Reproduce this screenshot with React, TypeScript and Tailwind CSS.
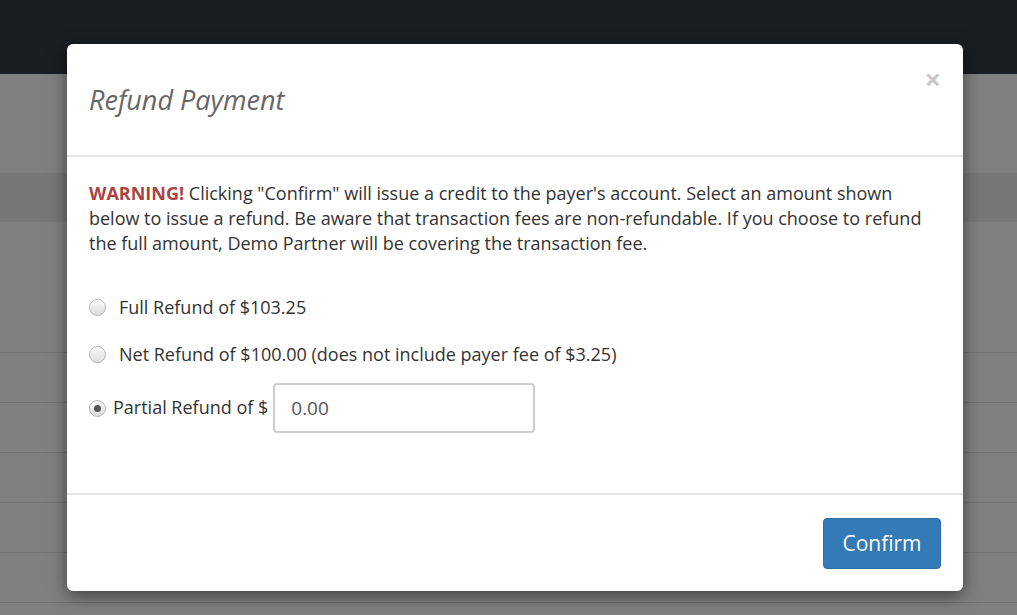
import React, { useState } from 'react';

type Choice = 'full' | 'net' | 'partial';

function Radio({ checked }: { checked: boolean }) {
  return (
    <span className="flex h-[17px] w-[17px] shrink-0 items-center justify-center rounded-full border border-[#b4b4b4] bg-gradient-to-b from-[#fbfbfb] to-[#dcdcdc] shadow-[inset_0_1px_0_#fff]">
      {checked && <span className="h-[7px] w-[7px] rounded-full bg-[#555]" />}
    </span>
  );
}

export default function App() {
  const [choice, setChoice] = useState<Choice>('partial');
  const [amount, setAmount] = useState('0.00');

  return (
    <div className="relative h-[615px] w-full overflow-hidden bg-[#808080] font-['Open_Sans',sans-serif]">
      {/* page behind the backdrop */}
      <div className="h-[74px] bg-[#1a1d21]" />
      <div className="h-[99px]" />
      <div className="h-[49px] bg-[#777777]" />
      <div className="h-[130px]" />
      {[0, 1, 2, 3, 4, 5].map((i) => (
        <div key={i} className="h-[50px] border-t border-[#737373]" />
      ))}

      {/* modal */}
      <div className="absolute left-[67px] top-[44px] w-[896px] rounded-[6px] bg-white shadow-[0_5px_18px_rgba(0,0,0,0.5)]">
        <div className="flex h-[113px] items-start justify-between border-b-2 border-[#e5e5e5] pl-[22px] pr-[22px]">
          <h4 className="pt-[37px] text-[27px] italic leading-[38px] text-[#666]">Refund Payment</h4>
          <button className="mt-[20px] text-[29px] font-bold leading-[30px] text-[#c8c8c8]">×</button>
        </div>

        <div className="h-[336px] px-[22px] pt-[24px]">
          <p className="text-[18px] leading-[25px] text-[#333]">
            <b className="text-[#a94442]">WARNING!</b> Clicking "Confirm" will issue a credit to the payer's
            account. Select an amount shown below to issue a refund. Be aware that transaction fees are
            non-refundable. If you choose to refund the full amount, Demo Partner will be covering the
            transaction fee.
          </p>

          <div className="mt-[39px] flex flex-col text-[18px] text-[#333]">
            <label className="flex h-[25px] cursor-pointer items-center gap-[13px]" onClick={() => setChoice('full')}>
              <Radio checked={choice === 'full'} />
              <span>Full Refund of $103.25</span>
            </label>
            <label className="mt-[22px] flex h-[25px] cursor-pointer items-center gap-[13px]" onClick={() => setChoice('net')}>
              <Radio checked={choice === 'net'} />
              <span>Net Refund of $100.00 (does not include payer fee of $3.25)</span>
            </label>
            <div className="mt-[16px] flex items-center">
              <label className="flex cursor-pointer items-center gap-[7px]" onClick={() => setChoice('partial')}>
                <Radio checked={choice === 'partial'} />
                <span className="-mt-[2px]">Partial Refund of $</span>
              </label>
              <input
                value={amount}
                onChange={(e) => setAmount(e.target.value)}
                className="ml-[5px] h-[50px] w-[262px] rounded-[4px] border-2 border-[#cfcfcf] px-[16px] text-[19px] text-[#555] outline-none"
              />
            </div>
          </div>
        </div>

        <div className="flex justify-end border-t-2 border-[#e5e5e5] pb-[22px] pr-[22px] pt-[23px]">
          <button className="h-[51px] w-[118px] rounded-[4px] border border-[#2e6da4] bg-[#337ab7] text-[21px] text-white">
            Confirm
          </button>
        </div>
      </div>
    </div>
  );
}
